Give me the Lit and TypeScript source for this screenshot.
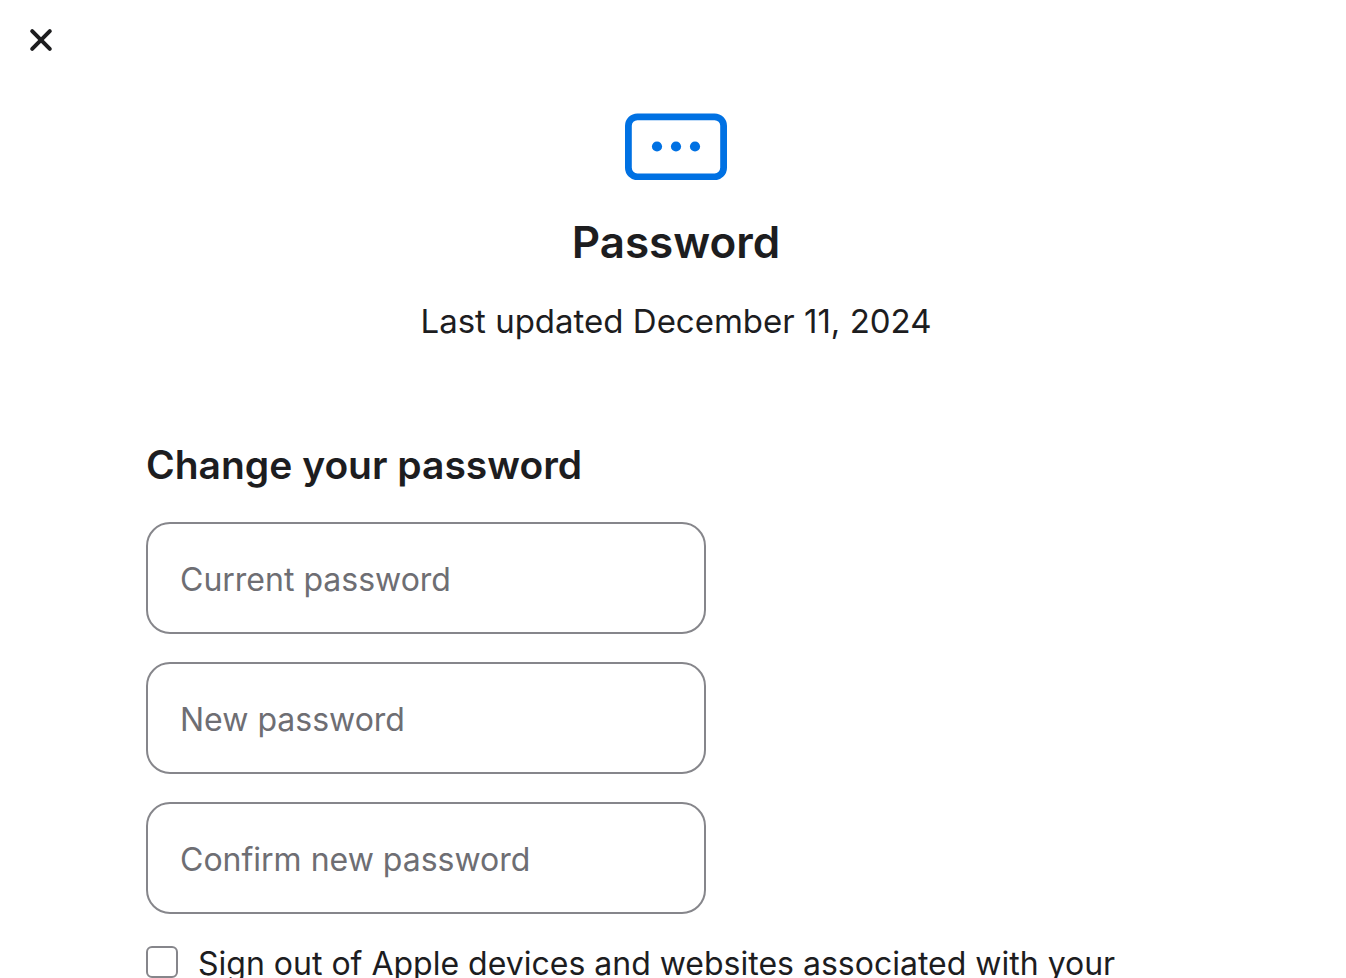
import { LitElement, html, css } from "lit";
import { customElement } from "lit/decorators.js";

@customElement("app-root")
class AppRoot extends LitElement {
  static styles = css`
    :host { display: block; height: 100vh; overflow: auto; scrollbar-width: none; background: #fff; color: #1d1d1f; font-family: Inter, "Liberation Sans", sans-serif; }
    * { box-sizing: border-box; }
    .bar { padding: 28px 28px 58px; }
    .close { display: block; width: 26px; height: 26px; padding: 0; border: 0; background: none; color: #1d1d1f; }
    svg { display: block; }
    .intro { display: flex; flex-direction: column; align-items: center; padding-left: 6px; }
    h1 { margin: 32px 0 0; font-size: 44px; line-height: 60px; font-weight: 600; }
    .updated { margin: 24px 0 0; font-size: 33px; line-height: 50px; }
    form { padding: 94px 146px 0; }
    h2 { margin: 0; font-size: 39px; line-height: 50px; font-weight: 600; }
    .fields { display: grid; gap: 28px; margin-top: 32px; max-width: 560px; }
    input { margin: 0; font: inherit; color: inherit; background: #fff; }
    .field { display: block; width: 100%; height: 112px; padding: 2px 32px 0; border: 2px solid #86868b; border-radius: 24px; font-size: 32px; line-height: 50px; }
    .field::placeholder { color: #6e6e73; opacity: 1; }
    .option { display: flex; gap: 20px; margin-top: 25px; font-size: 32px; line-height: 50px; }
    .check { appearance: none; flex: none; width: 32px; height: 32px; margin-top: 7px; border: 2px solid #86868b; border-radius: 6px; }
  `;

  render() {
    return html`
      <header class="bar">
        <button class="close" aria-label="Close">
          <svg width="26" height="26" viewBox="0 0 26 26" fill="none" stroke="currentColor" stroke-width="4" stroke-linecap="round"><path d="M4.2 3.2 21.8 20.8M21.8 3.2 4.2 20.8" /></svg>
        </button>
      </header>
      <main>
        <section class="intro">
          <svg width="102" height="68" viewBox="0 0 102 68" fill="none"><rect x="3.4" y="4.8" width="95.2" height="60" rx="9" stroke="#0071e3" stroke-width="6.8" /><g fill="#0071e3"><circle cx="32" cy="34.5" r="5.1" /><circle cx="51" cy="34.5" r="5.1" /><circle cx="70" cy="34.5" r="5.1" /></g></svg>
          <h1>Password</h1>
          <p class="updated">Last updated December 11, 2024</p>
        </section>
        <form>
          <h2>Change your password</h2>
          <div class="fields">
            <input class="field" type="password" aria-label="Current password" placeholder="Current password" />
            <input class="field" type="password" aria-label="New password" placeholder="New password" />
            <input class="field" type="password" aria-label="Confirm new password" placeholder="Confirm new password" />
          </div>
          <div class="option">
            <input class="check" id="signout" type="checkbox" />
            <label for="signout">Sign out of Apple devices and websites associated with your</label>
          </div>
        </form>
      </main>
    `;
  }
}
